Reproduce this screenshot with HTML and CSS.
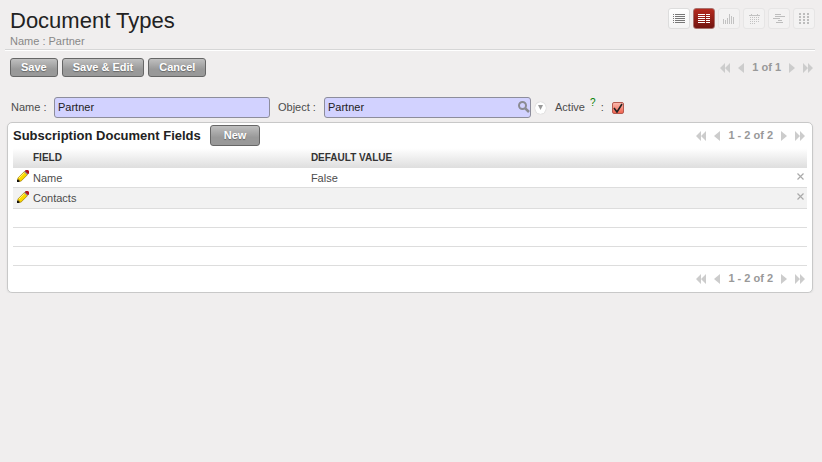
FILE: index.html
```
<!DOCTYPE html>
<html lang="en">
<head>
  <meta charset="UTF-8">
  <meta name="viewport" content="width=device-width, initial-scale=1">
  <title>Document Types</title>
  <link rel="stylesheet" href="styles.css">
</head>
<body>
  <!-- shared icons -->
  <svg class="sprite" aria-hidden="true">
    <symbol id="first" viewBox="0 0 10 10"><path d="M5 0v10L0 5zM10 0v10L5 5z"/></symbol>
    <symbol id="prev" viewBox="0 0 6 10"><path d="M6 0v10L0 5z"/></symbol>
    <symbol id="next" viewBox="0 0 6 10"><path d="M0 0v10l6-5z"/></symbol>
    <symbol id="last" viewBox="0 0 10 10"><path d="M0 0v10l5-5zM5 0v10l5-5z"/></symbol>
    <symbol id="cross" viewBox="0 0 7 7"><path d="M.5 .5l6 6M6.5 .5l-6 6" fill="none" stroke="#aaa" stroke-width="1.2"/></symbol>
    <symbol id="pencil" viewBox="0 0 12 12">
      <path d="M0 12l.6-4L7.600 1l3.400 3.400L4 11.400z" fill="#a8850c"/>
      <path d="M1 8.300L7.500 1.800l2.700 2.700-6.500 6.400z" fill="#fbd900"/>
      <path d="M2 8L7.500 2.500" stroke="#fff27a" fill="none"/>
      <path d="M7 1.800l1.500-1.300 3 3L10.200 5z" fill="#8f9aa0"/>
      <path d="M8.300 0H11l1 1v2.700h-1.500L8.300 1.500z" fill="#b3101c"/>
      <path d="M0 12v-2l.8-.6 1.900 1.900-.7.700z" fill="#111"/>
    </symbol>
  </svg>

  <div class="header">
    <div>
      <h1>Document Types</h1>
      <div class="subtitle">Name : Partner</div>
    </div>
    <div class="views">
      <button type="button" class="view" aria-label="List">
        <svg width="12" height="9" fill="#777"><path d="M0 0h1v1H0zM2 0h10v1H2zM0 2h1v1H0zM2 2h10v1H2zM0 4h1v1H0zM2 4h10v1H2zM0 6h1v1H0zM2 6h10v1H2zM0 8h1v1H0zM2 8h10v1H2z"/></svg>
      </button>
      <button type="button" class="view active" aria-label="Form">
        <svg width="12" height="9" fill="#fff"><path d="M0 0h7v1H0zM0 2h7v1H0zM0 4h7v1H0zM0 6h7v1H0zM0 8h7v1H0zM8 0h4v1H8zM8 2h4v1H8zM8 4h4v1H8zM8 6h4v1H8zM8 8h4v1H8z"/></svg>
      </button>
      <button type="button" class="view" disabled aria-label="Graph">
        <svg width="12" height="10" fill="#c2c2c2"><path d="M0 5h1v5H0zM2 6h1v4H2zM4 4h1v6H4zM6 0h1v10H6zM8 2h1v8H8zM10 3h1v7h-1z"/></svg>
      </button>
      <button type="button" class="view" disabled aria-label="Calendar">
        <svg width="11" height="10" fill="#c2c2c2"><path d="M0 1h11v1H0zM2 0h1v1H2zM8 0h1v1H8zM1 3h1v1H1zM3 3h1v1H3zM5 3h1v1H5zM7 3h1v1H7zM9 3h1v1H9zM1 5h1v1H1zM3 5h1v1H3zM5 5h1v1H5zM7 5h1v1H7zM9 5h1v1H9zM1 7h1v1H1zM3 7h1v1H3zM5 7h1v1H5zM7 7h1v1H7zM9 7h1v1H9zM1 9h1v1H1zM3 9h1v1H3zM5 9h1v1H5z"/></svg>
      </button>
      <button type="button" class="view" disabled aria-label="Gantt">
        <svg width="12" height="9" fill="#bdbdbd"><path d="M2 0h6v1H2zM2 2h10v1H2zM0 4h7v1H0zM5 6h4v1H5zM3 8h7v1H3z"/></svg>
      </button>
      <button type="button" class="view" disabled aria-label="Kanban">
        <svg width="10" height="11" fill="#bdbdbd"><path d="M0 0h2v2H0zM4 0h2v2H4zM8 0h2v2H8zM0 3h2v2H0zM4 3h2v2H4zM8 3h2v2H8zM0 6h2v2H0zM4 6h2v2H4zM8 6h2v2H8zM0 9h2v2H0zM4 9h2v2H4zM8 9h2v2H8z"/></svg>
      </button>
    </div>
  </div>

  <form>
    <div class="toolbar">
      <div class="buttons">
        <button type="submit" class="btn">Save</button>
        <button type="submit" class="btn">Save &amp; Edit</button>
        <button type="button" class="btn">Cancel</button>
      </div>
      <div class="pager">
        <a href="#" aria-label="First"><svg width="10" height="10"><use href="#first"/></svg></a>
        <a href="#" aria-label="Previous"><svg width="6" height="10"><use href="#prev"/></svg></a>
        <span>1 of 1</span>
        <a href="#" aria-label="Next"><svg width="6" height="10"><use href="#next"/></svg></a>
        <a href="#" aria-label="Last"><svg width="10" height="10"><use href="#last"/></svg></a>
      </div>
    </div>

    <div class="fields">
      <div class="field">
        <label for="name">Name :</label>
        <input type="text" id="name" class="text" value="Partner">
      </div>
      <div class="field object">
        <label for="object">Object :</label>
        <div class="search">
          <input type="text" id="object" class="text" value="Partner">
          <button type="button" class="lookup" aria-label="Search">
            <svg width="12" height="12" fill="none" stroke="#8b8b93"><circle cx="4.500" cy="4.500" r="3.500" stroke-width="2"/><path d="M7.300 7.300l3.700 3.700" stroke-width="2.500"/></svg>
          </button>
        </div>
        <button type="button" class="open" aria-label="Open">
          <svg width="5" height="5"><path d="M0 0h5L2.500 5z" fill="#999"/></svg>
        </button>
      </div>
      <div class="field check">
        <label for="active">Active <sup>?</sup> :</label>
        <input type="checkbox" id="active" checked>
      </div>
    </div>

    <div class="panel">
      <div class="panel-head">
        <h2>Subscription Document Fields</h2>
        <button type="button" class="btn new">New</button>
        <div class="pager">
          <a href="#" aria-label="First"><svg width="10" height="10"><use href="#first"/></svg></a>
          <a href="#" aria-label="Previous"><svg width="6" height="10"><use href="#prev"/></svg></a>
          <span>1 - 2 of 2</span>
          <a href="#" aria-label="Next"><svg width="6" height="10"><use href="#next"/></svg></a>
          <a href="#" aria-label="Last"><svg width="10" height="10"><use href="#last"/></svg></a>
        </div>
      </div>
      <table>
        <thead>
          <tr><th class="edit"></th><th class="name">FIELD</th><th>DEFAULT VALUE</th><th class="delete"></th></tr>
        </thead>
        <tbody>
          <tr>
            <td class="edit"><button type="button" aria-label="Edit"><svg width="12" height="12"><use href="#pencil"/></svg></button></td>
            <td>Name</td>
            <td>False</td>
            <td class="delete"><button type="button" aria-label="Delete"><svg width="7" height="7"><use href="#cross"/></svg></button></td>
          </tr>
          <tr class="odd">
            <td class="edit"><button type="button" aria-label="Edit"><svg width="12" height="12"><use href="#pencil"/></svg></button></td>
            <td>Contacts</td>
            <td></td>
            <td class="delete"><button type="button" aria-label="Delete"><svg width="7" height="7"><use href="#cross"/></svg></button></td>
          </tr>
          <tr class="empty"><td colspan="4"></td></tr>
          <tr class="empty"><td colspan="4"></td></tr>
          <tr class="empty"><td colspan="4"></td></tr>
        </tbody>
      </table>
      <div class="panel-foot">
        <div class="pager">
          <a href="#" aria-label="First"><svg width="10" height="10"><use href="#first"/></svg></a>
          <a href="#" aria-label="Previous"><svg width="6" height="10"><use href="#prev"/></svg></a>
          <span>1 - 2 of 2</span>
          <a href="#" aria-label="Next"><svg width="6" height="10"><use href="#next"/></svg></a>
          <a href="#" aria-label="Last"><svg width="10" height="10"><use href="#last"/></svg></a>
        </div>
      </div>
    </div>
  </form>
</body>
</html>
```
FILE: styles.css
```
* {
  box-sizing: border-box;
}

body {
  margin: 0;
  background: #f0eeee;
  color: #4c4c4c;
  font-family: "Liberation Sans", Arial, sans-serif;
  font-size: 11px;
  line-height: 14px;
}

button,
input {
  font-family: inherit;
  font-size: 11px;
  margin: 0;
  padding: 0;
}

button {
  border: none;
  background: none;
  cursor: pointer;
}

svg {
  display: block;
}

.sprite {
  display: none;
}

.header {
  display: flex;
  justify-content: space-between;
  align-items: flex-start;
  margin: 0 7px 0 5px;
  padding: 8px 0 0 5px;
  border-bottom: 1px solid #d6d6d6;
  box-shadow: 0 1px 0 #fff;
}

h1 {
  margin: 0;
  color: #222;
  font-size: 22px;
  font-weight: normal;
  line-height: 26px;
}

.subtitle {
  color: #888;
  line-height: 15px;
}

.views {
  display: flex;
  gap: 3px;
}

.view {
  display: flex;
  align-items: center;
  justify-content: center;
  width: 22px;
  height: 21px;
  border: 1px solid #ddd;
  border-radius: 3px;
  background: linear-gradient(#fff, #f4f4f4);
}

.view:disabled {
  border-color: #e6e5e5;
  background: #f3f2f2;
  cursor: default;
}

.view.active {
  border: 1px solid #a8706c;
  background: linear-gradient(#b52a1e, #721410);
}

.toolbar {
  display: flex;
  justify-content: space-between;
  align-items: center;
  padding: 8px 9px 0 10px;
}

.buttons {
  display: flex;
  gap: 4px;
}

.btn {
  height: 19px;
  padding: 0 10px 1px;
  border: 1px solid #666;
  border-radius: 3px;
  background: linear-gradient(#c0c0c0, #999 60%, #999);
  color: #fff;
  font-weight: bold;
  text-shadow: 0 1px 1px #666;
}

.pager {
  display: flex;
  align-items: center;
  gap: 8px;
  color: #999;
  font-weight: bold;
}

.pager span {
  padding-bottom: 2px;
}

.pager svg {
  fill: #ccc;
}

.fields {
  display: grid;
  grid-template-columns: 267fr 276fr 263fr;
  margin: 20px 9px 4px 7px;
}

.field {
  display: flex;
  align-items: center;
  padding: 0 4px;
}

.field label {
  flex: none;
  width: 43px;
  padding-bottom: 2px;
}

.field.object label {
  width: 46px;
}

.field.check label {
  width: auto;
  margin-right: 8px;
  padding-left: 1px;
}

.text {
  flex: 1;
  width: 100%;
  min-width: 0;
  height: 21px;
  padding: 0 3px 1px;
  border: 1px solid #8d8d9c;
  border-radius: 3px;
  background: #d2d2ff;
  color: #222;
}

.search {
  position: relative;
  display: flex;
  flex: 1;
}

.lookup {
  position: absolute;
  top: 4px;
  right: 1px;
}

.open {
  display: flex;
  align-items: center;
  justify-content: center;
  width: 11px;
  height: 12px;
  margin-left: 4px;
  border-radius: 50%;
  background: #fff;
  box-shadow: 0 0 1px #aaa;
}

sup {
  margin: 0 2px;
  color: #008000;
  font-size: 10px;
  line-height: 0;
}

input[type="checkbox"] {
  appearance: none;
  width: 12px;
  height: 12px;
  border: 1px solid #b55a50;
  border-radius: 2px;
  background: #f08070;
}

input[type="checkbox"]:checked {
  background: url("data:image/svg+xml,%3Csvg xmlns='http://www.w3.org/2000/svg' viewBox='0 0 10 10'%3E%3Cpath d='M1 5l3 4 5-8' fill='none' stroke='%23222' stroke-width='1.600'/%3E%3C/svg%3E"), linear-gradient(#fcb8ac, #f06450);
}

.panel {
  margin: 0 9px 0 7px;
  padding: 2px 5px 5px;
  border: 1px solid #c8c8c8;
  border-radius: 5px;
  background: #fff;
  box-shadow: 0 1px 2px #ddd;
}

.panel-head {
  display: flex;
  align-items: center;
}

.panel .pager {
  margin-left: auto;
  padding-right: 2px;
}

h2 {
  margin: 0;
  color: #222;
  font-size: 13px;
}

.btn.new {
  height: 21px;
  margin-left: 9px;
  padding: 0 13px 1px;
}

table {
  width: 100%;
  border-spacing: 0;
  table-layout: fixed;
}

th,
td {
  padding: 0;
  text-align: left;
}

th {
  height: 22px;
  padding-top: 2px;
  color: #333;
  font-size: 10px;
}

thead tr {
  background: linear-gradient(#fff 10%, #dedede);
}

td {
  height: 20px;
  border-bottom: 1px solid #ddd;
}

.odd td {
  height: 21px;
}

.odd {
  background: #f2f2f2;
}

.empty td {
  height: 19px;
}

.edit {
  width: 20px;
}

td.edit {
  padding-left: 4px;
}

.name {
  width: 35%;
}

.delete {
  width: 20px;
}

td.delete {
  padding: 0 3px 3px 0;
}

.delete button {
  display: block;
  margin-left: auto;
}

.panel-foot {
  display: flex;
  padding-top: 5px;
}
```
